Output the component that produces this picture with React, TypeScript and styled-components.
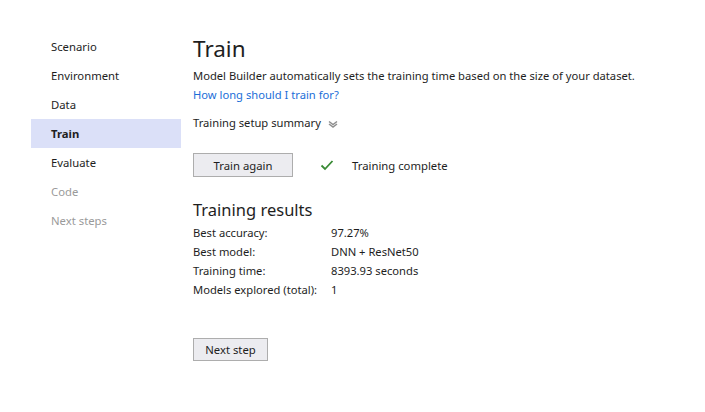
import React from "react";
import styled, { createGlobalStyle } from "styled-components";

const Global = createGlobalStyle`
  html, body { margin: 0; padding: 0; background: #ffffff; }
  body { font-family: "Segoe UI", "Noto Sans", sans-serif; color: #1e1e1e; }
`;

const Page = styled.div`
  display: flex;
  width: 705px;
  height: 412px;
  background: #fff;
`;

const Nav = styled.nav`
  display: flex;
  flex-direction: column;
  width: 150px;
  margin-left: 31px;
  padding-top: 32px;
`;

const NavItem = styled.div<{ $active?: boolean; $disabled?: boolean }>`
  height: 29px;
  display: flex;
  align-items: center;
  padding-left: 20px;
  font-size: 11.3px;
  font-weight: ${(p) => (p.$active ? 700 : 400)};
  color: ${(p) => (p.$disabled ? "#9a9a9a" : "#1e1e1e")};
  background: ${(p) => (p.$active ? "#dbe0f8" : "transparent")};
`;

const Main = styled.main`
  display: flex;
  flex-direction: column;
  margin-left: 12px;
  padding-top: 34px;
`;

const Title = styled.h1`
  margin: 0;
  font-size: 22.5px;
  font-weight: 400;
  line-height: 30px;
`;

const Text = styled.div`
  font-size: 11.2px;
  line-height: 16px;
  margin-top: 4px;
`;

const Link = styled.a`
  font-size: 11.2px;
  line-height: 16px;
  color: #1a6ed8;
  margin-top: 3px;
  text-decoration: none;
`;

const Summary = styled.div`
  display: flex;
  align-items: center;
  gap: 7px;
  font-size: 11.2px;
  line-height: 16px;
  margin-top: 12px;
`;

const ActionRow = styled.div`
  display: flex;
  align-items: center;
  margin-top: 22px;
`;

const Button = styled.button<{ $w: number; $h: number }>`
  width: ${(p) => p.$w}px;
  height: ${(p) => p.$h}px;
  padding: 0;
  font-family: inherit;
  font-size: 11.3px;
  color: #1e1e1e;
  background: #ececf0;
  border: 1px solid #adadad;
  border-radius: 0;
`;

const Status = styled.div`
  display: flex;
  align-items: center;
  margin-left: 27px;
  gap: 18px;
  font-size: 11.3px;
`;

const SubTitle = styled.h2`
  margin: 21px 0 0 0;
  font-size: 16.5px;
  font-weight: 400;
  line-height: 24px;
`;

const Results = styled.div`
  display: grid;
  grid-template-columns: 138px auto;
  grid-auto-rows: 19px;
  align-items: center;
  font-size: 11.2px;
  margin-top: 1px;
`;

const NextWrap = styled.div`
  margin-top: 38px;
`;

const Chevron = () => (
  <svg width="10" height="9" viewBox="0 0 10 9" style={{ marginTop: 3 }}>
    <path d="M1 1.5 L5 4.5 L9 1.5" fill="none" stroke="#8f8f8f" strokeWidth="1.5" />
    <path d="M1 4 L5 7 L9 4" fill="none" stroke="#8f8f8f" strokeWidth="1.5" />
  </svg>
);

const Check = () => (
  <svg width="14" height="12" viewBox="0 0 14 12">
    <path d="M1.5 6.5 L5 10 L12.5 2" fill="none" stroke="#388a34" strokeWidth="1.8" />
  </svg>
);

export default function App() {
  const nav = [
    { label: "Scenario" },
    { label: "Environment" },
    { label: "Data" },
    { label: "Train", active: true },
    { label: "Evaluate" },
    { label: "Code", disabled: true },
    { label: "Next steps", disabled: true },
  ];
  const results: [string, string][] = [
    ["Best accuracy:", "97.27%"],
    ["Best model:", "DNN + ResNet50"],
    ["Training time:", "8393.93 seconds"],
    ["Models explored (total):", "1"],
  ];
  return (
    <>
      <Global />
      <Page>
        <Nav>
          {nav.map((n) => (
            <NavItem key={n.label} $active={n.active} $disabled={n.disabled}>
              {n.label}
            </NavItem>
          ))}
        </Nav>
        <Main>
          <Title>Train</Title>
          <Text>Model Builder automatically sets the training time based on the size of your dataset.</Text>
          <Link href="#">How long should I train for?</Link>
          <Summary>
            Training setup summary <Chevron />
          </Summary>
          <ActionRow>
            <Button $w={100} $h={24}>Train again</Button>
            <Status>
              <Check />
              Training complete
            </Status>
          </ActionRow>
          <SubTitle>Training results</SubTitle>
          <Results>
            {results.map(([k, v]) => (
              <React.Fragment key={k}>
                <span>{k}</span>
                <span>{v}</span>
              </React.Fragment>
            ))}
          </Results>
          <NextWrap>
            <Button $w={75} $h={23}>Next step</Button>
          </NextWrap>
        </Main>
      </Page>
    </>
  );
}
